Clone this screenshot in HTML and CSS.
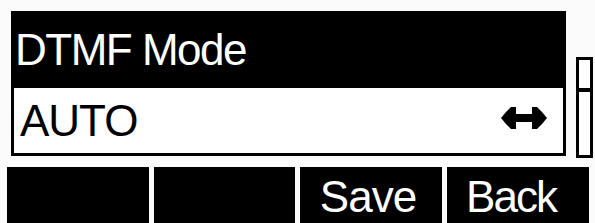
FILE: index.html
```html
<!DOCTYPE html>
<html>
<head>
<meta charset="utf-8">
<link rel="stylesheet" href="styles.css">
</head>
<body>
<div class="phone">
  <div class="screen">
    <div class="list">
      <div class="title">DTMF Mode</div>
      <div class="row">
        <span class="value">AUTO</span>
        <svg class="lr" width="46" height="24" viewBox="0 0 46 24">
          <polygon points="0,12 5,6 10,1 15,1 15,23 10,23 5,18" fill="#000"/>
          <polygon points="46,12 41,6 36,1 31,1 31,23 36,23 41,18" fill="#000"/>
          <rect x="14" y="8" width="18" height="8" fill="#000"/>
        </svg>
      </div>
    </div>
    <div class="scroll">
      <div class="thumb"></div>
      <div class="track"></div>
    </div>
  </div>
  <div class="softkeys">
    <div class="key"></div>
    <div class="key"></div>
    <div class="key">Save</div>
    <div class="key back">Back</div>
  </div>
</div>
</body>
</html>
```
FILE: styles.css
```css
html, body {
  margin: 0;
  padding: 0;
  background: #fbfbfb;
}
.phone {
  width: 595px;
  height: 223px;
  overflow: hidden;
  font-family: "Liberation Sans", Arial, sans-serif;
}
.screen {
  display: flex;
  gap: 10px;
  padding: 11px 0 0 11px;
}
.list {
  width: 555px;
}
.title {
  height: 77px;
  background: #000;
  color: #fff;
  font-size: 44px;
  letter-spacing: -1.5px;
  line-height: 77px;
  padding-left: 4px;
  box-sizing: border-box;
}
.row {
  height: 68px;
  box-sizing: border-box;
  border: 3px solid #000;
  border-top: 0;
  background: #fff;
  display: flex;
  align-items: center;
  justify-content: space-between;
  padding: 0 16px 0 6px;
}
.value {
  font-size: 44px;
  line-height: 1;
  color: #000;
  letter-spacing: -1px;
}
.lr {
  display: block;
  margin-bottom: 6px;
}
.scroll {
  margin-top: 46px;
  width: 17px;
  height: 101px;
  display: flex;
  flex-direction: column;
}
.thumb {
  height: 35px;
  box-sizing: border-box;
  border: 3px solid #000;
  border-bottom: 4px solid #000;
  background: #fff;
}
.track {
  flex: 1;
  box-sizing: border-box;
  border: 3px solid #000;
  border-top: 0;
  background: #fff;
}
.softkeys {
  display: grid;
  grid-template-columns: 142px 141px 142px 142px;
  gap: 5px;
  margin-top: 9px;
  padding-left: 7px;
}
.key {
  height: 58px;
  background: #000;
  color: #fff;
  font-size: 44px;
  line-height: 60px;
  text-align: center;
  padding-right: 6px;
  letter-spacing: -1px;
}
.key.back {
  letter-spacing: -2px;
  padding-right: 14px;
}
```
